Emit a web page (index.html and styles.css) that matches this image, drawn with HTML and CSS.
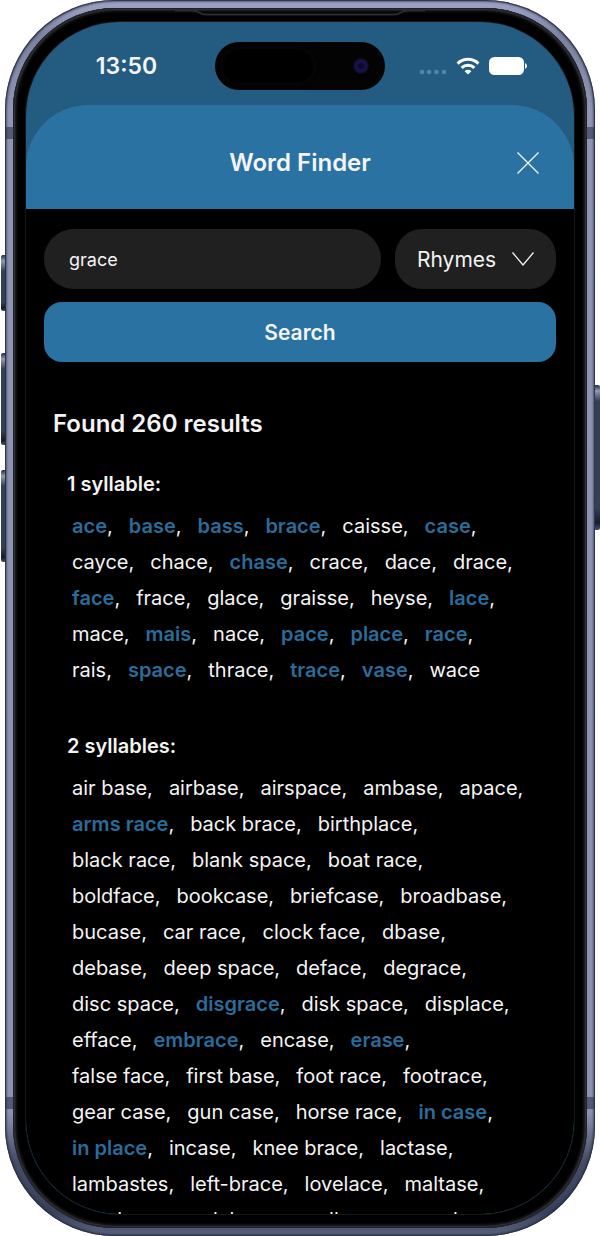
FILE: index.html
```html
<!DOCTYPE html>
<html lang="en">
<head>
  <meta charset="UTF-8" />
  <meta name="viewport" content="width=device-width, initial-scale=1.0"/>
  <title>Word Finder</title>
  <link rel="stylesheet" href="styles.css">
</head>
<body>
  <div class="phone">
    <span class="key key-action"></span>
    <span class="key key-up"></span>
    <span class="key key-down"></span>
    <span class="key key-power"></span>
    <svg class="speaker" width="250" height="8" viewBox="0 0 250 8">
      <path d="M0 1.5h17q4 0 7 2t7 2h188q4 0 7-2t7-2h17"/>
    </svg>
    <span class="band band-top"></span>
    <span class="band band-bottom"></span>

    <div class="screen">
      <div class="status-bar">
        <time class="clock">13:50</time>
        <div class="island">
          <span class="sensor"></span>
          <span class="camera"></span>
        </div>
        <div class="status-icons">
          <svg class="cell" width="28" height="18" viewBox="0 0 28 18">
            <circle cx="3" cy="15" r="2.3"/><circle cx="10" cy="15" r="2.3"/><circle cx="17.5" cy="15" r="2.3"/><circle cx="25" cy="15" r="2.3"/>
          </svg>
          <svg class="wifi" width="24" height="18" viewBox="0 0 24 18">
            <path d="M1.6 6.6a14.9 14.9 0 0 1 20.8 0"/>
            <path d="M5.6 10.8a9.2 9.2 0 0 1 12.8 0"/>
            <path class="dot" d="M12 17.6l-3.4-3.4a4.9 4.9 0 0 1 6.8 0z"/>
          </svg>
          <svg class="battery" width="38" height="18" viewBox="0 0 38 18">
            <rect x="0" y="0" width="35" height="18" rx="5.5"/>
            <path d="M36 6q2 1 2 3t-2 3z"/>
          </svg>
        </div>
      </div>

      <main class="sheet">
        <header>
          <h1>Word Finder</h1>
          <button class="close" type="button" aria-label="Close">
            <svg width="24" height="24" viewBox="0 0 24 24"><path d="M1.5 1.5l21 21M22.5 1.5l-21 21"/></svg>
          </button>
        </header>

        <form class="search">
          <input class="word" type="text" value="grace" aria-label="Word" />
          <div class="mode">
            <select aria-label="Search type">
              <option>Rhymes</option>
              <option>Near rhymes</option>
              <option>Synonyms</option>
            </select>
            <svg width="24" height="16" viewBox="0 0 24 16"><path d="M1.5 1.5L12 14 22.5 1.5"/></svg>
          </div>
          <button class="submit" type="button">Search</button>
        </form>

        <section class="results">
          <h2>Found 260 results</h2>

          <h3>1 syllable:</h3>
          <div class="words">
            <p><span><b>ace</b>,</span> <span><b>base</b>,</span> <span><b>bass</b>,</span> <span><b>brace</b>,</span> <span>caisse,</span> <span><b>case</b>,</span></p>
            <p><span>cayce,</span> <span>chace,</span> <span><b>chase</b>,</span> <span>crace,</span> <span>dace,</span> <span>drace,</span></p>
            <p><span><b>face</b>,</span> <span>frace,</span> <span>glace,</span> <span>graisse,</span> <span>heyse,</span> <span><b>lace</b>,</span></p>
            <p><span>mace,</span> <span><b>mais</b>,</span> <span>nace,</span> <span><b>pace</b>,</span> <span><b>place</b>,</span> <span><b>race</b>,</span></p>
            <p><span>rais,</span> <span><b>space</b>,</span> <span>thrace,</span> <span><b>trace</b>,</span> <span><b>vase</b>,</span> <span>wace</span></p>
          </div>

          <h3>2 syllables:</h3>
          <div class="words">
            <p><span>air base,</span> <span>airbase,</span> <span>airspace,</span> <span>ambase,</span> <span>apace,</span></p>
            <p><span><b>arms race</b>,</span> <span>back brace,</span> <span>birthplace,</span></p>
            <p><span>black race,</span> <span>blank space,</span> <span>boat race,</span></p>
            <p><span>boldface,</span> <span>bookcase,</span> <span>briefcase,</span> <span>broadbase,</span></p>
            <p><span>bucase,</span> <span>car race,</span> <span>clock face,</span> <span>dbase,</span></p>
            <p><span>debase,</span> <span>deep space,</span> <span>deface,</span> <span>degrace,</span></p>
            <p><span>disc space,</span> <span><b>disgrace</b>,</span> <span>disk space,</span> <span>displace,</span></p>
            <p><span>efface,</span> <span><b>embrace</b>,</span> <span>encase,</span> <span><b>erase</b>,</span></p>
            <p><span>false face,</span> <span>first base,</span> <span>foot race,</span> <span>footrace,</span></p>
            <p><span>gear case,</span> <span>gun case,</span> <span>horse race,</span> <span><b>in case</b>,</span></p>
            <p><span><b>in place</b>,</span> <span>incase,</span> <span>knee brace,</span> <span>lactase,</span></p>
            <p><span>lambastes,</span> <span>left-brace,</span> <span>lovelace,</span> <span>maltase,</span></p>
            <p><span>misplace,</span> <span>neck brace,</span> <span>null space,</span> <span>on base,</span></p>
          </div>
        </section>
      </main>
    </div>
  </div>
</body>
</html>
```

FILE: styles.css
```css
* { box-sizing: border-box; }
body {
  margin: 0;
  padding: 0 5px;
  background: white;
  font-family: Inter, 'Liberation Sans', sans-serif;
  color: #f4f4f4;
}
h1, h2, h3, p { margin: 0; }
button, input, select {
  font-family: inherit;
  color: inherit;
  border: none;
  margin: 0;
}

/* phone body, the transparent border shows the metal gradient */
.phone {
  position: relative;
  height: 100vh;
  padding: 14px 13px;
  border: 8px solid transparent;
  border-radius: 110px;
  background:
    linear-gradient(black, black) padding-box,
    linear-gradient(#a0a5c6, #7c83a0 3%, #8f96b2 9%, #8b92ae 90%, #454d66 94%, #39415a 98%, #5a637e) border-box;
  box-shadow:
    inset 0 0 0 1px #1c2233,
    inset 0 0 0 2px #2e2f33,
    inset 0 0 3px 3px #2a2a2b;
}
.phone::after {
  content: "";
  position: absolute;
  inset: -8px;
  border-radius: 110px;
  box-shadow:
    inset 0 0 0 1px rgba(40, 47, 68, 0.8),
    inset 0 0 2px 2px rgba(40, 47, 68, 0.6);
  pointer-events: none;
}
.key {
  position: absolute;
  left: -12px;
  width: 5px;
  border-radius: 2px 0 0 2px;
  background: linear-gradient(#262c3e, #9299b0 6px, #353e55 16px, #353e55 85%, #161b29 95%, #4a5268);
}
.key-action { top: 247px; height: 56px; }
.key-up { top: 345px; height: 92px; }
.key-down { top: 462px; height: 92px; }
.key-power {
  top: 377px;
  left: auto;
  right: -13px;
  height: 145px;
  border-radius: 0 2px 2px 0;
}
.speaker {
  position: absolute;
  top: 1px;
  left: calc(50% - 125px);
  fill: none;
  stroke: #2c2c2c;
  stroke-width: 2;
}
.band {
  position: absolute;
  left: -8px;
  right: -8px;
  height: 12px;
  border: solid rgba(58, 65, 88, 0.7);
  border-width: 0 8px;
}
.band-top { top: 119px; }
.band-bottom { bottom: 119px; }

.screen {
  position: relative;
  height: 100%;
  display: flex;
  flex-direction: column;
  overflow: hidden;
  border-radius: 94px;
  background: #245b80;
  box-shadow: 0 0 0 1px #151515;
}

/* status bar */
.status-bar {
  display: grid;
  grid-template-columns: 1fr 170px 1fr;
  align-items: center;
  height: 83px;
  padding-top: 4px;
}
.clock {
  padding-left: 12px;
  text-align: center;
  font-size: 23px;
  font-weight: 600;
}
.island {
  display: flex;
  align-items: center;
  justify-content: space-between;
  height: 48px;
  padding: 0 16px 0 8px;
  border-radius: 24px;
  background: #030303;
}
.sensor {
  width: 90px;
  height: 34px;
  border-radius: 17px;
  background: #000;
  box-shadow: 0 0 4px 2px #070707;
}
.camera {
  width: 16px;
  height: 16px;
  border-radius: 50%;
  background: radial-gradient(circle, #0a0a2c 15%, #1a1450 45%, #07070f 75%);
}
.status-icons {
  display: flex;
  align-items: center;
  justify-content: flex-end;
  gap: 9px;
  padding-right: 47px;
  fill: white;
}
.cell { fill: #5484a5; }
.wifi path { fill: none; stroke: white; stroke-width: 3; }
.wifi .dot { fill: white; stroke: none; }

/* sheet */
.sheet {
  flex: 1;
  min-height: 0;
  overflow: hidden;
  border-radius: 62px 62px 0 0;
  background: #2a72a2;
}
header {
  display: grid;
  grid-template-columns: 1fr auto 1fr;
  align-items: center;
  height: 104px;
  padding: 11px 34px 0;
}
h1 {
  grid-column: 2;
  font-size: 24px;
  font-weight: 600;
}
.close {
  justify-self: end;
  padding: 0;
  background: none;
  line-height: 0;
}
.close path, .mode path {
  fill: none;
  stroke: #f4f4f4;
  stroke-width: 1.3;
}

.search {
  display: grid;
  grid-template-columns: 1fr 161px;
  gap: 13px 14px;
  padding: 20px 18px 0;
  background: black;
}
.word, .mode, .submit { height: 60px; }
.word {
  min-width: 0;
  padding: 0 25px;
  border-radius: 30px;
  background: #202020;
  font-size: 18px;
}
.mode {
  display: grid;
  align-items: center;
}
.mode select, .mode svg { grid-area: 1 / 1; }
.mode select {
  appearance: none;
  width: 100%;
  height: 100%;
  padding: 0 22px;
  border-radius: 27px;
  background: #202020;
  font-size: 21px;
}
.mode svg {
  justify-self: end;
  margin-right: 21px;
  pointer-events: none;
}
.submit {
  grid-column: 1 / -1;
  border-radius: 18px;
  background: #2a72a2;
  font-size: 21px;
  font-weight: 600;
}

/* results */
.results {
  padding: 47px 27px 0;
  background: black;
}
h2 {
  margin-bottom: 31px;
  font-size: 24px;
  line-height: 30px;
  font-weight: 600;
}
h3 {
  margin: 0 14px 10px;
  font-size: 20px;
  line-height: 28px;
  font-weight: 600;
}
.words {
  margin: 0 0 44px 19px;
  font-size: 20px;
  line-height: 36px;
}
.words p {
  display: flex;
  gap: 16px;
  white-space: nowrap;
}
.words b {
  color: #2a6c9a;
  font-weight: 600;
}
```
